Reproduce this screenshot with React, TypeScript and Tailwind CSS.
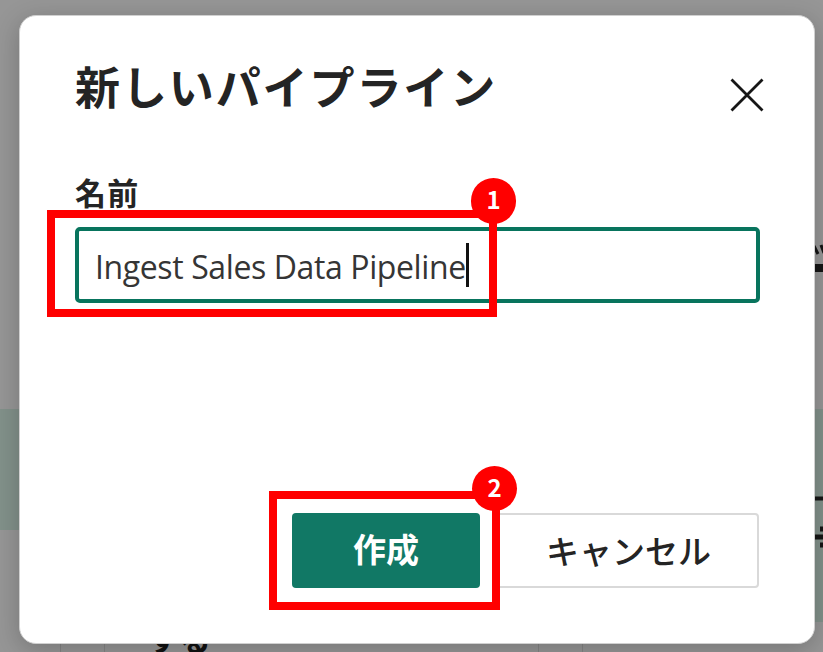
import { clsx } from "clsx";

function Badge({ value, className }: { value: number; className: string }) {
  return (
    <span
      className={clsx(
        "absolute flex w-[45px] items-center justify-center rounded-full bg-[#ff0000] pb-[4px] font-['Noto_Sans_CJK_JP',sans-serif] text-[24px] font-bold leading-none text-white",
        className,
      )}
    >
      {value}
    </span>
  );
}

function Backdrop() {
  return (
    <div className="absolute inset-0 overflow-hidden bg-[#969696]" aria-hidden="true">
      <div className="absolute left-0 top-[409px] h-[121px] w-10 bg-[#82918a]" />
      <div className="absolute right-0 top-[409px] h-[213px] w-10 bg-[#82918a]" />
      <div className="absolute left-[60px] top-[630px] h-[22px] w-[45px] border-x border-[#858585]" />
      <div className="absolute left-[538px] top-[630px] h-[22px] w-[45px] border-x border-[#858585]" />
      <div className="absolute left-[147px] top-[619px] whitespace-nowrap font-['Noto_Sans_CJK_JP',sans-serif] text-[32px] font-bold leading-[36px] text-[#111111]">
        する
      </div>
      <svg className="absolute right-0 top-0" width="12" height="652" viewBox="0 0 12 652" fill="none" stroke="#151515">
        <path d="M3 246l4 8M10 245l3 8" strokeWidth="3" />
        <path d="M0 268h12" strokeWidth="8" />
        <path d="M0 498.500h12" strokeWidth="4" />
        <path d="M0 537h12" strokeWidth="5" />
        <path d="M9 529h3M9 545h3" strokeWidth="5" />
      </svg>
    </div>
  );
}

export default function App() {
  return (
    <div className="relative h-[652px] w-[823px] overflow-hidden pl-[19px] pt-[15px] font-['Noto_Sans_CJK_JP',sans-serif]">
      <Backdrop />
      <main className="relative flex h-[629px] w-[796px] flex-col rounded-[17px] border border-[#d0d0d0] bg-white pl-[55px] pr-[54px] text-[#242424] shadow-[0_6px_26px_rgba(0,0,0,0.22)]">
        <header className="flex h-[99px] justify-between pt-[40px]">
          <h1 className="whitespace-nowrap text-[45px] font-bold leading-[60px] tracking-[1.900px]">新しいパイプライン</h1>
          <button aria-label="閉じる" className="mr-[-4px] mt-[22px] h-[34px] w-[34px] text-[#161616]">
            <svg className="h-full w-full" viewBox="0 0 34 34" fill="none" stroke="currentColor" strokeWidth="2.800">
              <path d="M1.500 1.500 32.500 32.500M32.500 1.500 1.500 32.500" />
            </svg>
          </button>
        </header>
        <label className="mt-[57px] block h-[40px] text-[31px] font-bold leading-[40px] tracking-[1.300px]">名前</label>
        <div className="relative mt-[15px] flex h-[76px] w-[685px] items-center rounded-[5px] border-4 border-[#08745d] pl-[16px]">
          <span className="whitespace-nowrap pt-[4px] font-['Open_Sans',sans-serif] text-[32px] leading-none tracking-[-0.390px] text-[#353535]">
            Ingest Sales Data Pipeline
          </span>
          <span className="h-[44px] w-[3px] bg-[#111111]" />
          <div className="absolute -left-[32px] -top-[21px] h-[107px] w-[450px] border-8 border-[#ff0000]">
            <Badge value={1} className="-right-[27px] -top-[40px] h-[46px]" />
          </div>
        </div>
        <div className="mt-[210px] flex">
          <div className="relative ml-[217px]">
            <button className="h-[75px] w-[188px] rounded-[4px] bg-[#117865] pb-[5px] text-[33px] font-bold leading-none text-white">作成</button>
            <div className="absolute -left-[23px] -top-[22px] z-10 h-[119px] w-[231px] border-8 border-[#ff0000]">
              <Badge value={2} className="-right-[25px] -top-[33px] h-[45px]" />
            </div>
          </div>
          <button className="ml-[16px] h-[75px] w-[263px] whitespace-nowrap rounded-[4px] border-2 border-[#d9d9d9] pl-[2px] text-[33px] font-medium leading-none">
            キャンセル
          </button>
        </div>
      </main>
    </div>
  );
}
